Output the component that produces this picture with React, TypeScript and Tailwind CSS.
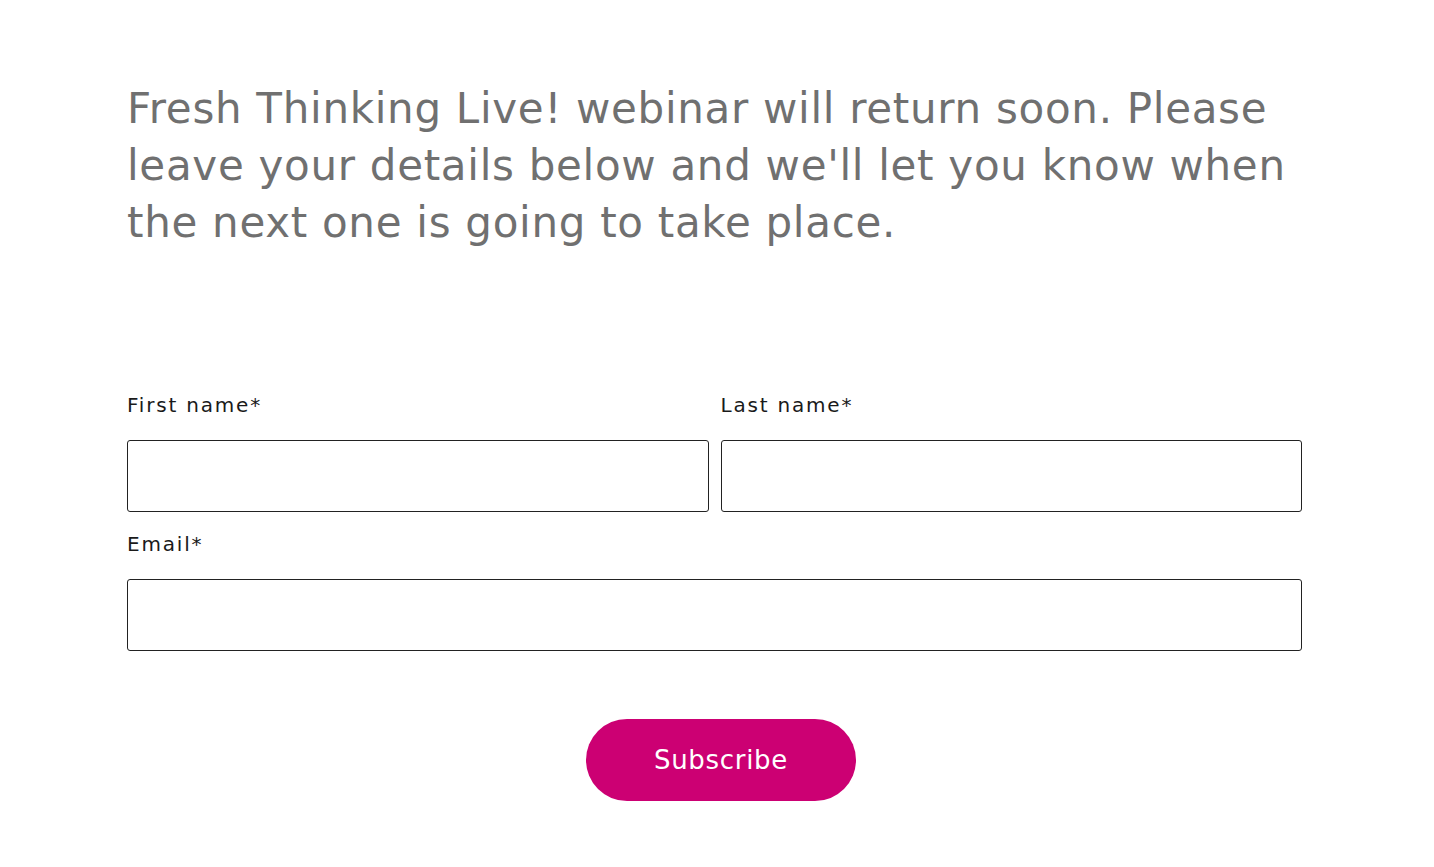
import React from "react";

export default function App() {
  const font = { fontFamily: '"DejaVu Sans", "Noto Sans", sans-serif' };
  return (
    <div className="min-h-[867px] w-full bg-white" style={font}>
      <div className="ml-[127px] w-[1175px] pt-[80px]">
        <h1 className="text-[42px] leading-[57px] font-normal text-[#707070] tracking-[0.7px]">
          Fresh Thinking Live! webinar will return soon. Please
          <br />
          leave your details below and we'll let you know when
          <br />
          the next one is going to take place.
        </h1>
        <form className="mt-[140px]" onSubmit={(e) => e.preventDefault()}>
          <div className="grid grid-cols-2 gap-x-[12px]">
            <label className="flex flex-col">
              <span className="text-[20px] leading-[28px] tracking-[1.8px] text-[#1a1a1a]">First name*</span>
              <input className="mt-[21px] h-[72px] rounded-[3px] border border-[#222] px-3 outline-none" />
            </label>
            <label className="flex flex-col">
              <span className="text-[20px] leading-[28px] tracking-[1.8px] text-[#1a1a1a]">Last name*</span>
              <input className="mt-[21px] h-[72px] rounded-[3px] border border-[#222] px-3 outline-none" />
            </label>
          </div>
          <label className="mt-[18px] flex flex-col">
            <span className="text-[20px] leading-[28px] tracking-[1.8px] text-[#1a1a1a]">Email*</span>
            <input className="mt-[21px] h-[72px] rounded-[3px] border border-[#222] px-3 outline-none" />
          </label>
          <div className="mt-[68px] flex">
            <button
              type="submit"
              className="ml-[459px] h-[82px] w-[270px] rounded-full bg-[#cc0073] text-[26px] tracking-[0.7px] text-white"
            >
              Subscribe
            </button>
          </div>
        </form>
      </div>
    </div>
  );
}
